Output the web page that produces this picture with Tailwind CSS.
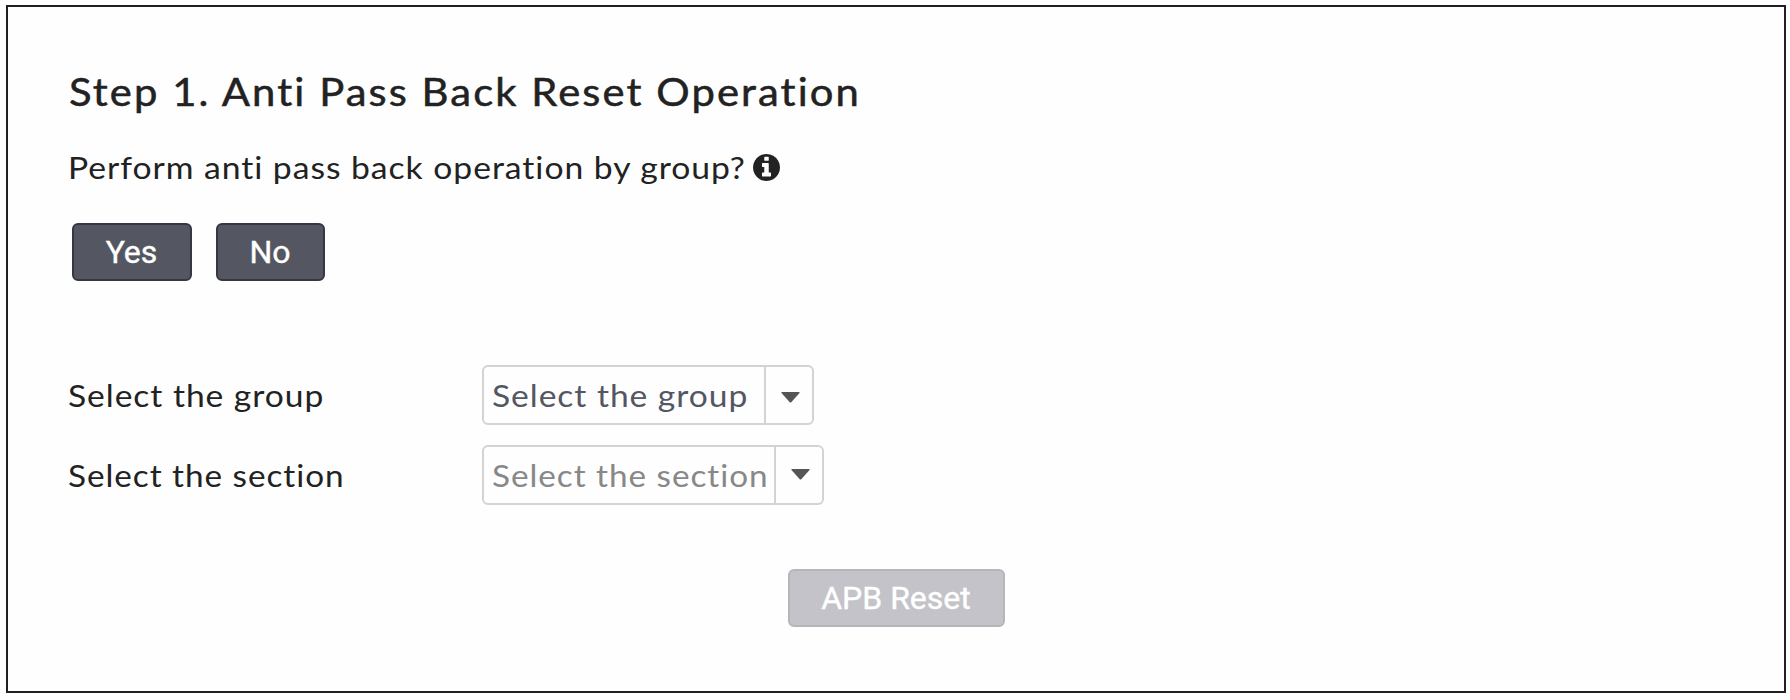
<!DOCTYPE html>
<html lang="en">
<head>
<meta charset="utf-8">
<title>Anti Pass Back Reset</title>
<script src="https://cdn.jsdelivr.net/npm/@tailwindcss/browser@4"></script>
</head>
<body class="h-[700px] overflow-hidden bg-[#fefefe] pt-[5px] pl-[6px] font-['Lato',sans-serif] text-[#222]">
<main class="flex h-[688px] w-[1780px] flex-col border-2 border-[#1f2022] bg-[#fefefe] pl-[60px] whitespace-nowrap">
  <h1 class="mt-[60px] ml-px h-12 w-[720px] origin-left scale-x-[1.099] text-[38px] leading-12 font-normal tracking-[1.9px] [-webkit-text-stroke:0.5px_#222]">Step 1. Anti Pass Back Reset Operation</h1>
  <p class="mt-[32px] flex h-10 items-center text-[31.5px] leading-10 tracking-[0.9px]">
    <span class="w-[685px] origin-left scale-x-[1.069]">Perform anti pass back operation by group?</span>
    <svg class="size-[27px]" viewBox="0 128 1536 1536" fill="#222"><path d="M1024 1376v-160q0-14-9-23t-23-9h-96v-512q0-14-9-23t-23-9h-320q-14 0-23 9t-9 23v160q0 14 9 23t23 9h96v320h-96q-14 0-23 9t-9 23v160q0 14 9 23t23 9h448q14 0 23-9t9-23zm-128-896v-160q0-14-9-23t-23-9h-192q-14 0-23 9t-9 23v160q0 14 9 23t23 9h192q14 0 23-9t9-23zm640 416q0 209-103 385.500t-279.500 279.500-385.500 103-385.500-103-279.500-279.500-103-385.500 103-385.500 279.500-279.500 385.500-103 385.500 103 279.500 279.500 103 385.500z"/></svg>
  </p>
  <div class="mt-[36px] ml-[4px] flex gap-6 font-['Roboto',sans-serif] text-[32px] leading-[54px] text-white [-webkit-text-stroke:0.4px_white]">
    <button class="h-[58px] w-[120px] rounded-md border-2 border-[#353842] bg-[#545762] pr-px">Yes</button>
    <button class="h-[58px] w-[109px] rounded-md border-2 border-[#353842] bg-[#545762] pr-px">No</button>
  </div>
  <div class="mt-[84px] flex h-[60px] items-center text-[31.5px] leading-[56px] tracking-[0.9px]">
    <label class="w-[414px] origin-left scale-x-[1.066]">Select the group</label>
    <div class="flex h-[60px] w-[332px] rounded-md border-2 border-[#d3d3d4]">
      <span class="w-[282px] border-r-2 border-[#d3d3d4] pl-2 text-[#545762]"><span class="inline-block origin-left scale-x-[1.066]">Select the group</span></span>
      <span class="flex flex-1 justify-center pt-[25px] pl-[2px]"><svg class="h-[11px] w-[19px]" viewBox="0 0 19 11" fill="#555"><path d="M1 0h17q1 0 .5 1L10.500 10q-1 1-2 0L.5 1Q0 0 1 0z"/></svg></span>
    </div>
  </div>
  <div class="mt-5 flex h-[60px] items-center text-[31.5px] leading-[56px] tracking-[0.9px]">
    <label class="w-[414px] origin-left scale-x-[1.058]">Select the section</label>
    <div class="flex h-[60px] w-[342px] rounded-md border-2 border-[#d3d3d4]">
      <span class="w-[292px] border-r-2 border-[#d3d3d4] pl-2 text-[#888]"><span class="inline-block origin-left scale-x-[1.058]">Select the section</span></span>
      <span class="flex flex-1 justify-center pt-[22px] pl-[2px]"><svg class="h-[11px] w-[19px]" viewBox="0 0 19 11" fill="#555"><path d="M1 0h17q1 0 .5 1L10.500 10q-1 1-2 0L.5 1Q0 0 1 0z"/></svg></span>
    </div>
  </div>
  <button class="mt-16 ml-[720px] h-[58px] w-[217px] rounded-md border-2 border-[#b5b5ba] bg-[#c3c3c9] pr-px font-['Roboto',sans-serif] text-[32px] leading-[54px] text-white [-webkit-text-stroke:0.4px_white]">APB Reset</button>
</main>
</body>
</html>
